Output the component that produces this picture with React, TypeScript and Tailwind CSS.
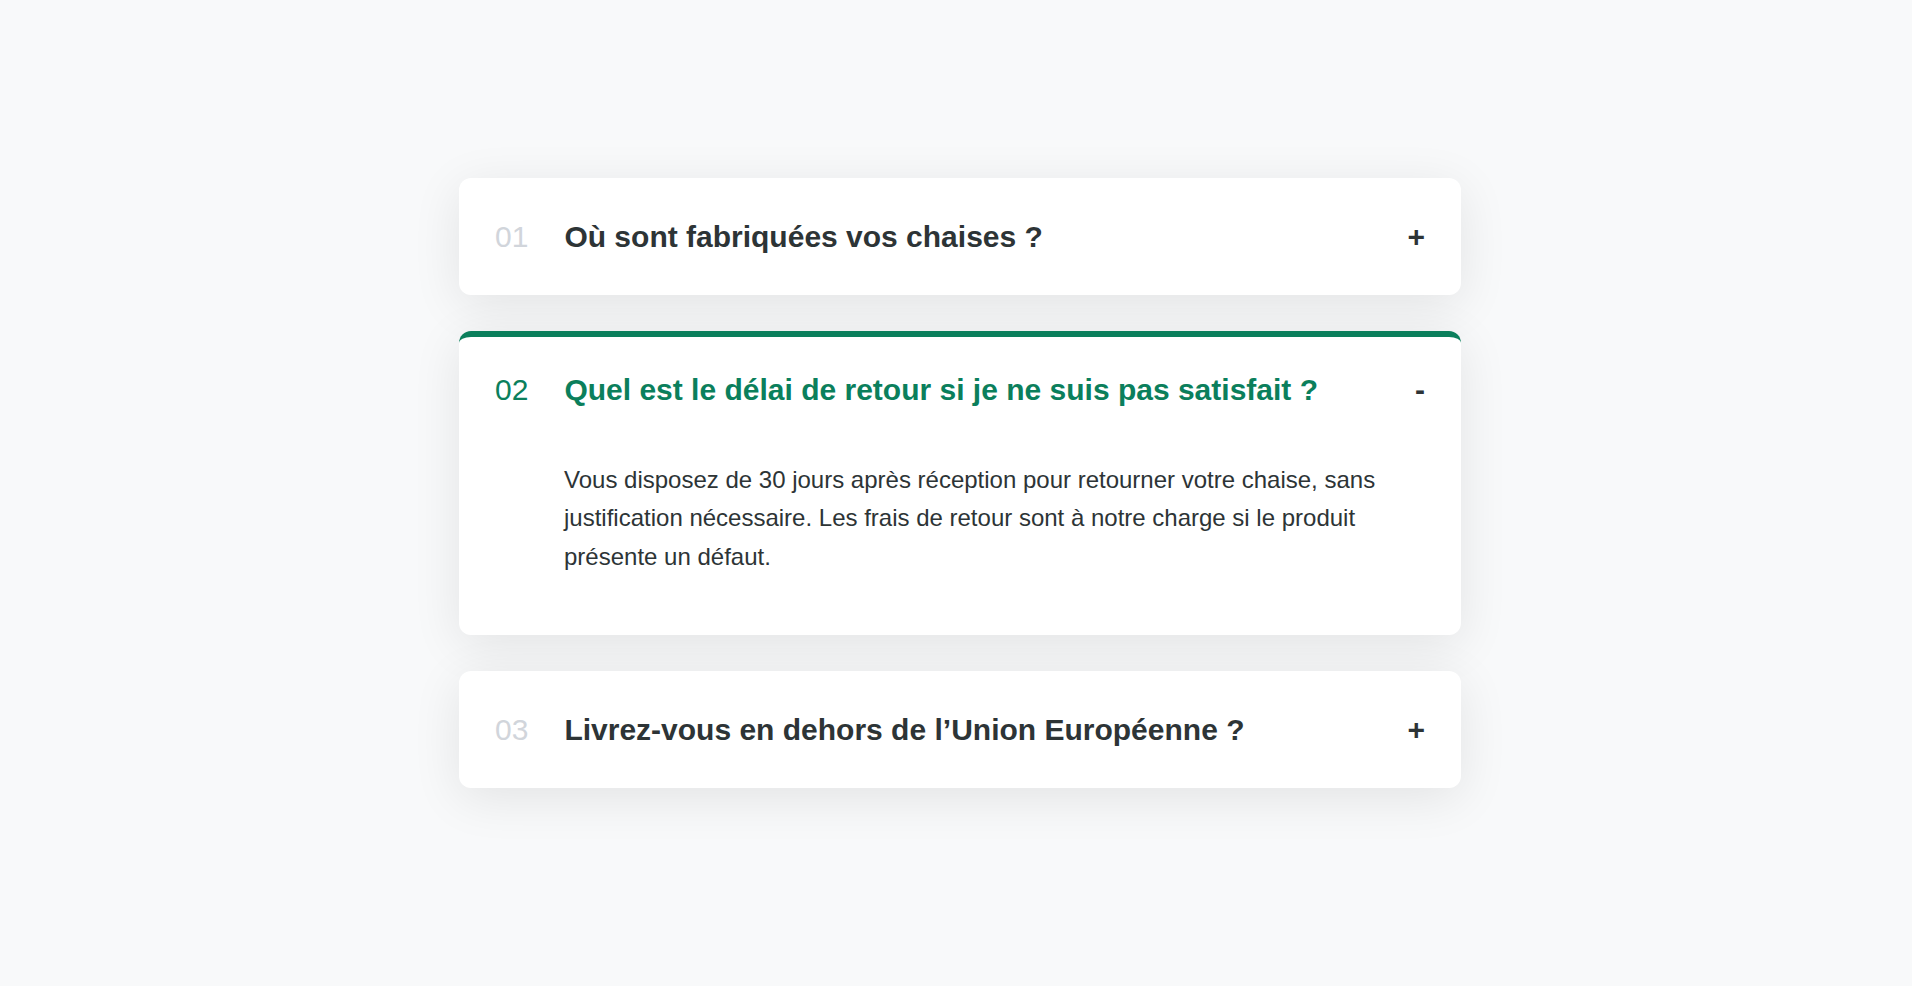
import { useState } from 'react';

const faqs = [
  {
    q: 'Où sont fabriquées vos chaises ?',
    a: 'Nos chaises sont conçues et assemblées dans notre atelier en France, avec des matériaux issus de fournisseurs européens.',
  },
  {
    q: 'Quel est le délai de retour si je ne suis pas satisfait ?',
    a: 'Vous disposez de 30 jours après réception pour retourner votre chaise, sans justification nécessaire. Les frais de retour sont à notre charge si le produit présente un défaut.',
  },
  {
    q: 'Livrez-vous en dehors de l’Union Européenne ?',
    a: 'Oui, nous livrons dans la plupart des pays. Les délais et frais de livraison sont calculés lors de la commande.',
  },
];

export default function App() {
  const [open, setOpen] = useState<number | null>(1);

  return (
    <div className="min-h-screen bg-[#f8f9fa] pt-[178px] pl-[8px] font-['Liberation_Sans',Arial,sans-serif]">
      <div className="mx-auto flex w-[1002px] flex-col gap-[36px]">
        {faqs.map((item, i) => {
          const isOpen = open === i;
          const num = String(i + 1).padStart(2, '0');
          return (
            <div
              key={i}
              className={
                isOpen
                  ? 'rounded-[12px] border-t-[6px] border-[#0b7f5c] bg-white px-[36px] pt-[30px] pb-[59px] shadow-[0_10px_50px_rgba(0,0,0,0.09)]'
                  : 'rounded-[12px] bg-white px-[36px] py-[36px] shadow-[0_10px_50px_rgba(0,0,0,0.09)]'
              }
            >
              <button
                onClick={() => setOpen(isOpen ? null : i)}
                className="flex w-full items-center gap-[36px] text-left text-[30px] leading-[45px]"
              >
                <span className={isOpen ? 'text-[#0b7f5c]' : 'text-[#d1d5db]'}>{num}</span>
                <span className={isOpen ? 'flex-1 font-bold text-[#0b7f5c]' : 'flex-1 font-bold text-[#2d3436]'}>
                  {item.q}
                </span>
                <span className="font-bold text-[#2d3436]">{isOpen ? '-' : '+'}</span>
              </button>
              {isOpen && (
                <p className="mt-[49px] ml-[69px] text-[24px] leading-[38.4px] text-[#2d3436]">
                  {item.a}
                </p>
              )}
            </div>
          );
        })}
      </div>
    </div>
  );
}
